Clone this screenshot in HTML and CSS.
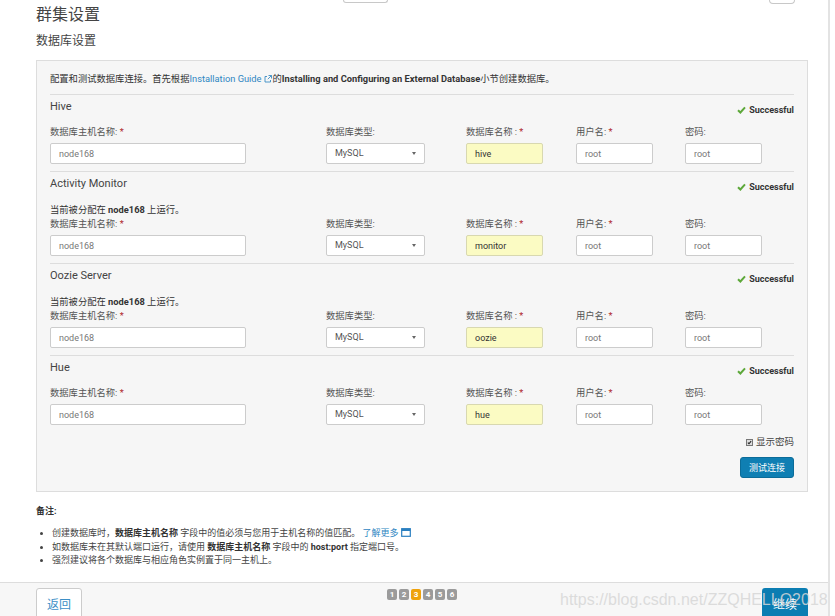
FILE: index.html
```html
<!DOCTYPE html>
<html lang="zh">
<head>
<meta charset="utf-8">
<title>群集设置</title>
<link rel="stylesheet" href="styles.css">
</head>
<body>
<div class="shell">
  <div class="main">
    <div class="topbar"><span class="stub stub-a"></span><span class="stub stub-b"></span></div>
    <div class="content">
      <h1 class="title">群集设置</h1>
      <h2 class="subtitle">数据库设置</h2>
      <div class="panel">
        <p class="intro">配置和测试数据库连接。首先根据<a class="link">Installation Guide</a><svg class="ext" width="8" height="8" viewBox="0 0 8 8"><path d="M3 1.5H1v5.5h5.5V5" fill="none" stroke="#3a8cc4" stroke-width="0.9"/><path d="M4.5 0.5h3v3M7.5 0.5L3.8 4.2" fill="none" stroke="#3a8cc4" stroke-width="0.9"/></svg>的<b>Installing and Configuring an External Database</b>小节创建数据库。</p>

        <section class="svc">
          <div class="svc-head"><span class="svc-name">Hive</span><span class="ok"><svg width="9" height="8" viewBox="0 0 9 8"><path d="M1 4.2L3.4 6.5L8 1.3" fill="none" stroke="#5da83a" stroke-width="2"/></svg>Successful</span></div>
          <div class="fields">
            <div class="field"><label>数据库主机名称: <span class="req">*</span></label><input class="input w-host" type="text" value="node168"></div>
            <div class="field"><label>数据库类型:</label><div class="select">MySQL<span class="caret"></span></div></div>
            <div class="field"><label>数据库名称 : <span class="req">*</span></label><input class="input w-sm hl" type="text" value="hive"></div>
            <div class="field"><label>用户名: <span class="req">*</span></label><input class="input w-sm" type="text" value="root"></div>
            <div class="field"><label>密码:</label><input class="input w-sm" type="text" value="root"></div>
          </div>
        </section>

        <section class="svc">
          <div class="svc-head"><span class="svc-name">Activity Monitor</span><span class="ok"><svg width="9" height="8" viewBox="0 0 9 8"><path d="M1 4.2L3.4 6.5L8 1.3" fill="none" stroke="#5da83a" stroke-width="2"/></svg>Successful</span></div>
          <p class="note">当前被分配在 <b>node168</b> 上运行。</p>
          <div class="fields">
            <div class="field"><label>数据库主机名称: <span class="req">*</span></label><input class="input w-host" type="text" value="node168"></div>
            <div class="field"><label>数据库类型:</label><div class="select">MySQL<span class="caret"></span></div></div>
            <div class="field"><label>数据库名称 : <span class="req">*</span></label><input class="input w-sm hl" type="text" value="monitor"></div>
            <div class="field"><label>用户名: <span class="req">*</span></label><input class="input w-sm" type="text" value="root"></div>
            <div class="field"><label>密码:</label><input class="input w-sm" type="text" value="root"></div>
          </div>
        </section>

        <section class="svc">
          <div class="svc-head"><span class="svc-name">Oozie Server</span><span class="ok"><svg width="9" height="8" viewBox="0 0 9 8"><path d="M1 4.2L3.4 6.5L8 1.3" fill="none" stroke="#5da83a" stroke-width="2"/></svg>Successful</span></div>
          <p class="note">当前被分配在 <b>node168</b> 上运行。</p>
          <div class="fields">
            <div class="field"><label>数据库主机名称: <span class="req">*</span></label><input class="input w-host" type="text" value="node168"></div>
            <div class="field"><label>数据库类型:</label><div class="select">MySQL<span class="caret"></span></div></div>
            <div class="field"><label>数据库名称 : <span class="req">*</span></label><input class="input w-sm hl" type="text" value="oozie"></div>
            <div class="field"><label>用户名: <span class="req">*</span></label><input class="input w-sm" type="text" value="root"></div>
            <div class="field"><label>密码:</label><input class="input w-sm" type="text" value="root"></div>
          </div>
        </section>

        <section class="svc">
          <div class="svc-head"><span class="svc-name">Hue</span><span class="ok"><svg width="9" height="8" viewBox="0 0 9 8"><path d="M1 4.2L3.4 6.5L8 1.3" fill="none" stroke="#5da83a" stroke-width="2"/></svg>Successful</span></div>
          <div class="fields">
            <div class="field"><label>数据库主机名称: <span class="req">*</span></label><input class="input w-host" type="text" value="node168"></div>
            <div class="field"><label>数据库类型:</label><div class="select">MySQL<span class="caret"></span></div></div>
            <div class="field"><label>数据库名称 : <span class="req">*</span></label><input class="input w-sm hl" type="text" value="hue"></div>
            <div class="field"><label>用户名: <span class="req">*</span></label><input class="input w-sm" type="text" value="root"></div>
            <div class="field"><label>密码:</label><input class="input w-sm" type="text" value="root"></div>
          </div>
        </section>

        <div class="show-pw"><span class="cb"><svg width="7" height="7" viewBox="0 0 7 7"><path d="M1.2 3.6L2.8 5.2L5.8 1.5" fill="none" stroke="#222" stroke-width="1.5"/></svg></span>显示密码</div>
        <div class="actions"><button class="btn-primary" type="button">测试连接</button></div>
      </div>

      <div class="notes">
        <div class="notes-title">备注:</div>
        <ul class="notes-list">
          <li>创建数据库时，<b>数据库主机名称</b> 字段中的值必须与您用于主机名称的值匹配。 <a class="link">了解更多</a> <svg class="win" width="10" height="9" viewBox="0 0 10 9"><rect x="0.7" y="0.7" width="8.6" height="7.6" fill="none" stroke="#2a7fc0" stroke-width="1.2"/><rect x="0.7" y="0.7" width="8.6" height="2.3" fill="#2a7fc0"/></svg></li>
          <li>如数据库未在其默认端口运行，请使用 <b>数据库主机名称</b> 字段中的 <b>host:port</b> 指定端口号。</li>
          <li>强烈建议将各个数据库与相应角色实例置于同一主机上。</li>
        </ul>
      </div>
    </div>

    <footer class="footer">
      <button class="btn-back" type="button">返回</button>
      <div class="pager">
        <span class="pg">1</span><span class="pg">2</span><span class="pg active">3</span><span class="pg">4</span><span class="pg">5</span><span class="pg">6</span>
      </div>
      <button class="btn-next" type="button">继续</button>
    </footer>
    <div class="watermark">https://blog.csdn.net/ZZQHELLO2018</div>
  </div>
  <div class="scrollbar"></div>
</div>
</body>
</html>
```

FILE: styles.css
```css
* { box-sizing: border-box; }
html, body { margin: 0; padding: 0; background: #fff; }
body {
  font-family: Roboto, "Noto Sans CJK SC", sans-serif;
  color: #444;
  width: 835px;
  height: 616px;
  overflow: hidden;
}
.shell { display: flex; height: 616px; }
.main {
  position: relative;
  width: 828px;
  height: 616px;
  display: flex;
  flex-direction: column;
}
.scrollbar {
  width: 7px;
  border-left: 2px solid #e3e3e3;
  background: #fff;
}
.topbar { height: 5px; display: flex; align-items: flex-start; }
.stub {
  display: block;
  border: 1px solid #c8c8c8;
  border-top: 0;
  border-radius: 0 0 4px 4px;
  background: #fff;
}
.stub-a { margin-left: 343px; width: 45px; height: 3px; }
.stub-b { margin-left: 381px; width: 26px; height: 4px; }

.content { padding: 0 20px 0 36px; }
.title {
  margin: 0;
  font-size: 16px;
  line-height: 20px;
  font-weight: 400;
  color: #444;
}
.subtitle {
  margin: 8px 0 0;
  font-size: 12px;
  line-height: 16px;
  font-weight: 400;
  color: #444;
}
.panel {
  margin-top: 11px;
  background: #f6f6f6;
  border: 1px solid #ddd;
  padding: 11px 13px 13px;
}
.intro {
  margin: 0 0 8px;
  font-size: 9.3px;
  line-height: 14px;
  color: #333;
}
.intro b { font-weight: 700; }
.link { color: #2f86c2; text-decoration: none; }
.ext { margin: 0 1px -1px 2px; }

.svc { border-top: 1px solid #ddd; padding: 5px 0 7px; }
.svc:last-of-type { padding-bottom: 6px; }
.svc-head { display: flex; justify-content: space-between; height: 16px; }
.svc-name { font-size: 11px; line-height: 14px; color: #444; }
.ok {
  align-self: flex-end;
  margin-bottom: -1px;
  display: flex;
  align-items: center;
  gap: 3px;
  font-size: 9px;
  line-height: 14px;
  font-weight: 700;
  color: #333;
}
.note {
  margin: 10px 0 0;
  font-size: 9.3px;
  line-height: 14px;
  color: #333;
}
.fields {
  display: grid;
  grid-template-columns: 276px 140px 110px 109px 1fr;
  margin-top: 9px;
}
.note + .fields { margin-top: 0; }
.field label {
  display: block;
  font-size: 9.3px;
  line-height: 14px;
  color: #555;
  margin-bottom: 4px;
}
.req { color: #b0282d; }
.input {
  display: block;
  height: 21px;
  border: 1px solid #ccc;
  border-radius: 2px;
  background: #fff;
  padding: 0 8px;
  font-family: Roboto, "Noto Sans CJK SC", sans-serif;
  font-size: 9px;
  color: #777;
  outline: none;
}
.w-host { width: 196px; }
.w-sm { width: 77px; }
.input.hl { background: #fbfbc3; color: #333; border-color: #d8d8b0; }
.select {
  position: relative;
  width: 99px;
  height: 21px;
  border: 1px solid #ccc;
  border-radius: 2px;
  background: #fff;
  padding: 0 8px;
  font-size: 9px;
  line-height: 19px;
  color: #555;
}
.caret {
  position: absolute;
  right: 8px;
  top: 8px;
  border-left: 2.5px solid transparent;
  border-right: 2.5px solid transparent;
  border-top: 3.5px solid #666;
}

.show-pw {
  margin-top: 4px;
  display: flex;
  justify-content: flex-end;
  align-items: center;
  gap: 3px;
  font-size: 9.5px;
  line-height: 14px;
  color: #444;
}
.cb {
  display: inline-flex;
  width: 7px;
  height: 7px;
  border: 1px solid #777;
  background: #ddd;
  align-items: center;
  justify-content: center;
}
.cb svg { display: block; }
.actions { margin-top: 8px; display: flex; justify-content: flex-end; }
.btn-primary {
  width: 54px;
  height: 21px;
  padding: 0;
  border: 1px solid #0b6c99;
  border-radius: 3px;
  background: #0f7fb3;
  color: #fff;
  font-family: Roboto, "Noto Sans CJK SC", sans-serif;
  font-size: 9px;
}

.notes { margin-top: 12px; font-size: 9px; color: #444; }
.notes-title { font-weight: 700; line-height: 14px; color: #333; }
.notes-list { margin: 9px 0 0; padding-left: 16px; }
.notes-list li { line-height: 13.5px; }
.notes-list b { color: #333; }
.win { vertical-align: -1px; }

.footer {
  margin-top: auto;
  height: 34px;
  border-top: 1px solid #ddd;
  background: #f7f7f7;
  display: flex;
  justify-content: space-between;
  align-items: flex-start;
  padding: 5px 20px 0 36px;
  overflow: hidden;
}
.btn-back {
  width: 46px;
  height: 32px;
  padding: 0 0 2px;
  border: 1px solid #ccc;
  border-radius: 3px;
  background: #fff;
  color: #3c8fc6;
  font-family: Roboto, "Noto Sans CJK SC", sans-serif;
  font-size: 12px;
}
.pager { display: flex; gap: 2px; margin-top: 1px; }
.pg {
  width: 10px;
  height: 11px;
  border-radius: 2px;
  background: #9b9b9b;
  color: #fff;
  font-size: 8px;
  font-weight: 700;
  line-height: 11px;
  text-align: center;
}
.pg.active { background: #efa20c; }
.btn-next {
  width: 46px;
  height: 32px;
  padding: 0 0 2px;
  border: 0;
  border-radius: 3px;
  background: #0b7db2;
  color: #fff;
  font-family: Roboto, "Noto Sans CJK SC", sans-serif;
  font-size: 12px;
}
.watermark {
  position: absolute;
  left: 560px;
  top: 590px;
  font-family: "Liberation Sans", Arial, sans-serif;
  font-size: 16px;
  line-height: 20px;
  color: rgba(214, 214, 214, 0.85);
  white-space: nowrap;
  pointer-events: none;
}
```
